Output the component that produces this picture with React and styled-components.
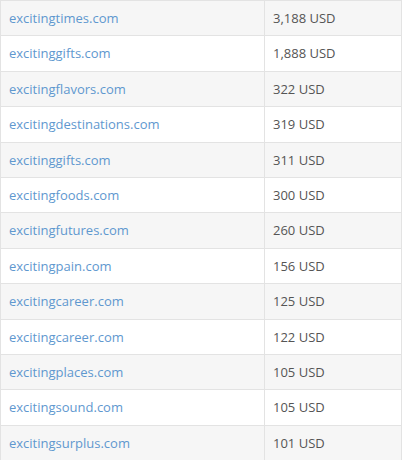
import React from "react";
import styled, { createGlobalStyle } from "styled-components";

const Global = createGlobalStyle`
  html, body { margin: 0; padding: 0; background: #fff; }
  body { font-family: "Open Sans", "Liberation Sans", sans-serif; }
`;

const Table = styled.table`
  width: 402px;
  border-collapse: collapse;
  font-size: 13px;
  border: 1px solid #e3e3e3;
`;

const Row = styled.tr`
  background: ${(p) => (p.$odd ? "#f6f6f6" : "#ffffff")};
`;

const Cell = styled.td`
  padding: 8px 8px;
  line-height: 18.4px;
  border-top: 1px solid #e3e3e3;
  border-left: 1px solid #e3e3e3;
  vertical-align: top;
  white-space: nowrap;
  width: ${(p) => p.$w};
  color: #555;
`;

const Link = styled.a`
  color: #5f98cf;
  text-decoration: none;
`;

const data = [
  ["excitingtimes.com", "3,188 USD"],
  ["excitinggifts.com", "1,888 USD"],
  ["excitingflavors.com", "322 USD"],
  ["excitingdestinations.com", "319 USD"],
  ["excitinggifts.com", "311 USD"],
  ["excitingfoods.com", "300 USD"],
  ["excitingfutures.com", "260 USD"],
  ["excitingpain.com", "156 USD"],
  ["excitingcareer.com", "125 USD"],
  ["excitingcareer.com", "122 USD"],
  ["excitingplaces.com", "105 USD"],
  ["excitingsound.com", "105 USD"],
  ["excitingsurplus.com", "101 USD"],
];

export default function App() {
  return (
    <>
      <Global />
      <Table>
        <tbody>
          {data.map(([d, p], i) => (
            <Row key={i} $odd={i % 2 === 0}>
              <Cell $w="247px">
                <Link href="#">{d}</Link>
              </Cell>
              <Cell>{p}</Cell>
            </Row>
          ))}
        </tbody>
      </Table>
    </>
  );
}
